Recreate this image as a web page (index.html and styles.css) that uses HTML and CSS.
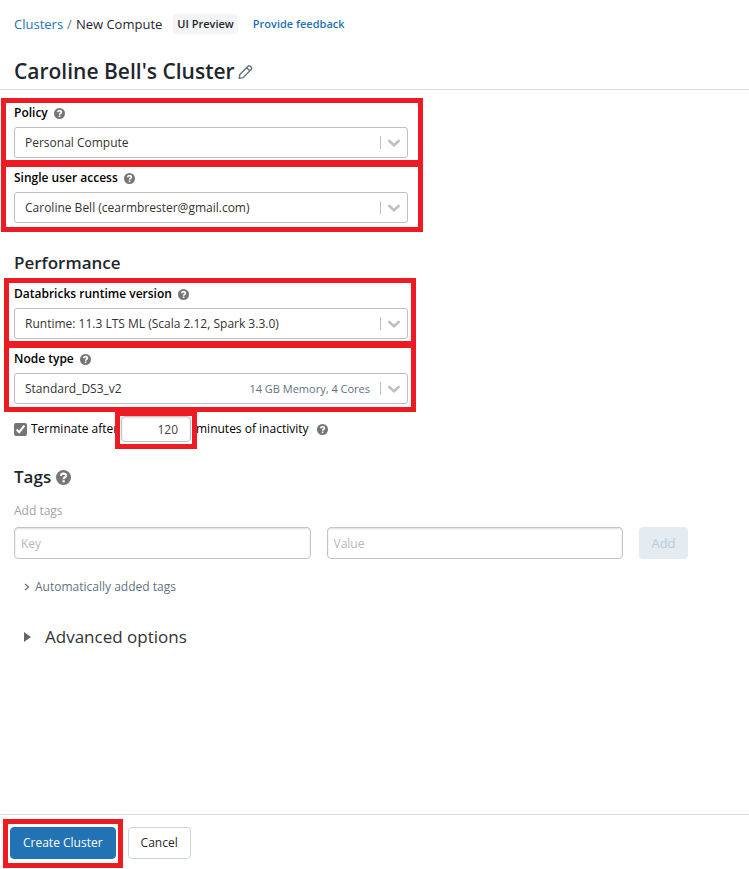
FILE: index.html
```html
<!DOCTYPE html>
<html lang="en">
<head>
<meta charset="utf-8">
<title>New Compute</title>
<link rel="stylesheet" href="styles.css">
</head>
<body>
<svg class="defs" aria-hidden="true">
  <symbol id="help" viewBox="0 0 12 12"><circle cx="6" cy="6" r="6" fill="#757575"/><path d="M3.9 4.7C4 2.3 8.1 2.3 8.1 4.5 8.1 5.8 6.1 5.7 6.1 7.3" fill="none" stroke="#fff" stroke-width="1.7"/><rect x="5.2" y="8.2" width="1.8" height="1.7" fill="#fff"/></symbol>
  <symbol id="chevron" viewBox="0 0 20 20"><path d="M5.3 8 10 12.3 14.7 8" fill="none" stroke="#bfbfbf" stroke-width="2.6" stroke-linecap="round"/></symbol>
</svg>
<header class="header">
  <nav class="crumbs">
    <a href="#">Clusters</a><span class="slash">/</span><span>New Compute</span>
    <span class="badge">UI Preview</span>
    <a class="feedback" href="#">Provide feedback</a>
  </nav>
  <div class="title-row">
    <h1>Caroline Bell's Cluster</h1>
    <button class="edit" type="button" aria-label="Edit name"><svg viewBox="0 0 16 16" fill="none" stroke="#5f7281" stroke-width="1.5" stroke-linejoin="round"><path d="M1.2 14.8 2 10.6 10.7 1.9Q11.9.9 13 1.9L14.1 3Q15.1 4.2 14.1 5.3L5.4 14 1.2 14.8ZM9.3 3.4 12.6 6.7"/></svg></button>
  </div>
</header>
<main class="main">
  <section class="group">
    <div class="field">
      <label for="policy">Policy <svg class="help"><use href="#help"/></svg></label>
      <div class="picker"><select id="policy"><option>Personal Compute</option></select><span class="arrow"><svg><use href="#chevron"/></svg></span></div>
    </div>
    <div class="field">
      <label for="access">Single user access <svg class="help"><use href="#help"/></svg></label>
      <div class="picker"><select id="access"><option>Caroline Bell (cearmbrester@gmail.com)</option></select><span class="arrow"><svg><use href="#chevron"/></svg></span></div>
    </div>
  </section>
  <h2 class="performance">Performance</h2>
  <section class="group narrow">
    <div class="field">
      <label for="runtime">Databricks runtime version <svg class="help"><use href="#help"/></svg></label>
      <div class="picker"><select id="runtime"><option>Runtime: 11.3 LTS ML (Scala 2.12, Spark 3.3.0)</option></select><span class="arrow"><svg><use href="#chevron"/></svg></span></div>
    </div>
    <div class="field">
      <label for="node">Node type <svg class="help"><use href="#help"/></svg></label>
      <div class="picker"><select id="node"><option>Standard_DS3_v2</option></select><span class="arrow"><span class="spec">14 GB Memory, 4 Cores</span><svg><use href="#chevron"/></svg></span></div>
    </div>
  </section>
  <div class="terminate">
    <input type="checkbox" id="terminate" checked>
    <label class="after" for="terminate">Terminate after</label>
    <span class="minutes"><input type="text" id="minutes" value="120"></span>
    <label for="minutes">minutes of inactivity</label>
    <svg class="help"><use href="#help"/></svg>
  </div>
  <section class="tags">
    <h2>Tags <svg class="help large"><use href="#help"/></svg></h2>
    <p class="hint">Add tags</p>
    <form class="tag-form">
      <input type="text" placeholder="Key" aria-label="Key">
      <input type="text" placeholder="Value" aria-label="Value">
      <button type="button" class="add" disabled>Add</button>
    </form>
    <button type="button" class="auto"><svg viewBox="0 0 6 8"><path d="M1 1 4.5 4 1 7" fill="none" stroke="#5f7281" stroke-width="1.2"/></svg>Automatically added tags</button>
  </section>
  <button type="button" class="advanced"><svg viewBox="0 0 7 12"><path d="M0 1 7 6 0 11Z" fill="#666"/></svg>Advanced options</button>
</main>
<footer class="footer">
  <span class="create-mark"><button type="button" class="button primary">Create Cluster</button></span>
  <button type="button" class="button">Cancel</button>
</footer>
</body>
</html>
```
FILE: styles.css
```css
* { box-sizing: border-box; }
body {
  margin: 0;
  min-height: 100vh;
  display: flex;
  flex-direction: column;
  background: #fff;
  color: #1f272d;
  font: 13px/20px "Open Sans", "Noto Sans", sans-serif;
}
button, input, select { font: inherit; color: inherit; }
button { padding: 0; border: 0; background: none; }
a { color: #2272b4; text-decoration: none; }
h1, h2, p { margin: 0; }
.defs { position: absolute; width: 0; height: 0; }

.header { height: 90px; padding: 14px 14px 0; border-bottom: 1px solid #d9d9d9; }
.crumbs { display: flex; align-items: center; }
.slash { margin: 0 4px; color: #6b7780; }
.badge {
  margin: 0 15px 0 11px;
  padding: 0 4px;
  border-radius: 4px;
  background: #f3f4f5;
  font-size: 11px;
  font-weight: 600;
}
.feedback { font-size: 11px; font-weight: 600; }
.title-row { display: flex; align-items: center; gap: 3px; margin-top: 22px; }
h1 { font-size: 21px; line-height: 30px; font-weight: 600; }
.edit { height: 14px; }
.edit svg { display: block; width: 15px; height: 16px; }

.main { flex: 1; padding-top: 8px; }
.group {
  max-width: 422px;
  margin-left: 1px;
  padding: 0 10px 4px 8px;
  border: 5px solid #ed1c24;
}
.group.narrow { max-width: 412px; margin-left: 4px; padding: 1px 3px 3px 5px; }
.field label { display: flex; align-items: center; gap: 6px; margin-bottom: 4px; color: #000; font-weight: 600; font-size: 12px; }
.field + .field { position: relative; margin-top: 2px; padding-top: 8px; }
.field + .field::before {
  content: "";
  position: absolute;
  inset: 0 -10px auto -8px;
  height: 7px;
  background: #ed1c24;
}
.narrow .field + .field::before { inset: 0 -3px auto -5px; }
.help { flex: none; width: 11px; height: 11px; }
.help.large { width: 15px; height: 15px; }
.picker { position: relative; }
.picker select {
  display: block;
  width: 100%;
  height: 31px;
  padding: 0 36px 0 10px;
  border: 1px solid #bfbfbf;
  border-radius: 3px;
  background: #fff;
  appearance: none;
  color: #333;
  font-size: 12px;
}
.arrow {
  position: absolute;
  inset: 0 4px 0 auto;
  display: flex;
  align-items: center;
  pointer-events: none;
}
.arrow svg { width: 20px; height: 20px; order: 2; }
.arrow::after { content: ""; order: 1; width: 1px; height: 13px; margin-right: 3px; background: #bfbfbf; }
.spec { margin-right: 10px; color: #5f7281; font-size: 11px; }

h2 { font-size: 17px; line-height: 24px; font-weight: 600; }
.performance { margin: 19px 14px 3px; }

.terminate { display: flex; align-items: center; height: 26px; margin: 4px 14px 0; color: #000; font-size: 12px; }
.terminate input[type="checkbox"] { width: 13px; height: 13px; margin: 0 4px 0 0; accent-color: #757575; }
.after { width: 90px; white-space: nowrap; }
.minutes { position: relative; width: 70px; height: 26px; margin-right: 5px; }
.minutes::after { content: ""; position: absolute; inset: -5px -6px -7px; border: 5px solid #ed1c24; pointer-events: none; }
.minutes input { display: block; width: 70px; height: 26px; padding: 0 12px; text-align: right; color: #444; }
input[type="text"] {
  border: 1px solid #c4c4c4;
  border-radius: 4px;
  background: #fff;
  box-shadow: inset 0 1px 2px #0002;
}
.terminate .help { margin-left: 8px; }

.tags { padding: 23px 14px 0; }
.tags h2 { display: flex; align-items: center; gap: 5px; }
.hint { margin-top: 12px; color: #a3a3a3; font-size: 12px; }
.tag-form { display: flex; gap: 16px; max-width: 674px; margin-top: 6px; }
.tag-form input { flex: 1; min-width: 0; height: 32px; padding: 0 6px; font-size: 12px; }
.tag-form input::placeholder { color: #b8b8b8; }
.add { width: 49px; height: 32px; border-radius: 4px; background: #e4ebf1; color: #b9c9d8; }
.auto { display: flex; align-items: center; gap: 5px; margin: 18px 0 0 10px; color: #5f7281; font-size: 12px; }
.auto svg { width: 6px; height: 8px; }
.advanced { display: flex; align-items: center; gap: 14px; margin: 28px 0 0 24px; color: #333; font-size: 17px; line-height: 24px; }
.advanced svg { width: 7px; height: 12px; }

.footer { display: flex; align-items: flex-start; gap: 5px; height: 55px; padding: 4px 3px 0; border-top: 1px solid #d9d9d9; }
.create-mark { padding: 3px 2px 4px; border: 5px solid #ed1c24; }
.button { display: block; height: 32px; padding: 0 12px; border: 1px solid #c8d6e3; border-radius: 4px; font-size: 12px; }
.button.primary { border-color: #2272b4; background: #2272b4; color: #fff; }
.footer > .button { margin-top: 8px; }
```
